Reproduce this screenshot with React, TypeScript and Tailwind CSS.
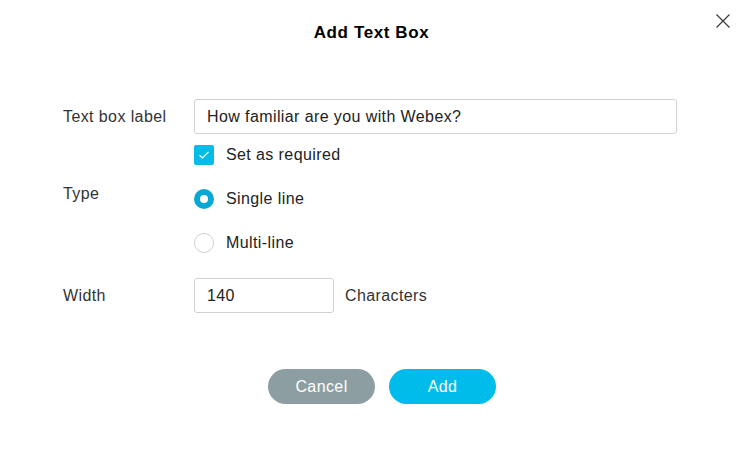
import React, { useState } from 'react';

const App = () => {
  const [label, setLabel] = useState('How familiar are you with Webex?');
  const [required, setRequired] = useState(true);
  const [type, setType] = useState<'single' | 'multi'>('single');
  const [width, setWidth] = useState('140');

  const radio = (value: 'single' | 'multi', text: string) => (
    <button
      type="button"
      onClick={() => setType(value)}
      className="flex items-center gap-[12px] h-[20px] text-left"
    >
      {type === value ? (
        <span className="w-[20px] h-[20px] rounded-full bg-[#07a7d6] flex items-center justify-center">
          <span className="w-[8px] h-[8px] rounded-full bg-white" />
        </span>
      ) : (
        <span className="w-[20px] h-[20px] rounded-full border border-[#d0d0d0] bg-white" />
      )}
      <span className="text-[16px] tracking-[0.4px] text-[#222]">{text}</span>
    </button>
  );

  return (
    <div
      className="relative w-[743px] h-[466px] bg-white text-[#333] text-[16px] tracking-[0.4px]"
      style={{ fontFamily: '"Liberation Sans", Arial, sans-serif' }}
    >
      {/* close */}
      <button type="button" className="absolute top-[13px] right-[12px] w-[16px] h-[16px]">
        <svg width="16" height="16" viewBox="0 0 16 16" fill="none" stroke="#3a3a3a" strokeWidth="1.2">
          <path d="M1.5 1.5 L14.5 14.5 M14.5 1.5 L1.5 14.5" />
        </svg>
      </button>

      <h2 className="pt-[22px] text-center text-[17px] tracking-[0.6px] leading-[22px] font-bold text-black">Add Text Box</h2>

      <div className="mt-[55px] pl-[63px]">
        {/* label row */}
        <div className="flex items-center h-[35px]">
          <div className="w-[131px]">Text box label</div>
          <input
            value={label}
            onChange={(e) => setLabel(e.target.value)}
            className="w-[483px] h-[35px] border border-[#d2d2d2] rounded-[3px] px-[12px] text-[#222] outline-none"
          />
        </div>

        <div className="flex mt-[11px]">
          <div className="w-[131px]" />
          <button type="button" onClick={() => setRequired(!required)} className="flex items-center gap-[12px] h-[20px]">
            <span
              className={
                required
                  ? 'w-[20px] h-[20px] rounded-[2px] bg-[#07bbe8] flex items-center justify-center'
                  : 'w-[20px] h-[20px] rounded-[2px] border border-[#d0d0d0] bg-white'
              }
            >
              {required && (
                <svg width="12" height="10" viewBox="0 0 12 10" fill="none" stroke="white" strokeWidth="1.2">
                  <path d="M1.5 5.2 L4.5 8 L10.5 1.8" />
                </svg>
              )}
            </span>
            <span className="text-[#222]">Set as required</span>
          </button>
        </div>

        {/* type row */}
        <div className="flex mt-[24px]">
          <div className="w-[131px] leading-[20px] -mt-[5px]">Type</div>
          <div className="flex flex-col gap-[24px]">
            {radio('single', 'Single line')}
            {radio('multi', 'Multi-line')}
          </div>
        </div>

        {/* width row */}
        <div className="flex items-center h-[35px] mt-[25px]">
          <div className="w-[131px]">Width</div>
          <input
            value={width}
            onChange={(e) => setWidth(e.target.value)}
            className="w-[140px] h-[35px] border border-[#d2d2d2] rounded-[3px] px-[12px] text-[#222] outline-none"
          />
          <span className="ml-[11px]">Characters</span>
        </div>
      </div>

      <div className="flex gap-[14px] pl-[268px] mt-[56px]">
        <button type="button" className="w-[107px] h-[35px] rounded-full bg-[#8c9ea1] text-white">
          Cancel
        </button>
        <button type="button" className="w-[107px] h-[35px] rounded-full bg-[#00bceb] text-white">
          Add
        </button>
      </div>
    </div>
  );
};

export default App;
